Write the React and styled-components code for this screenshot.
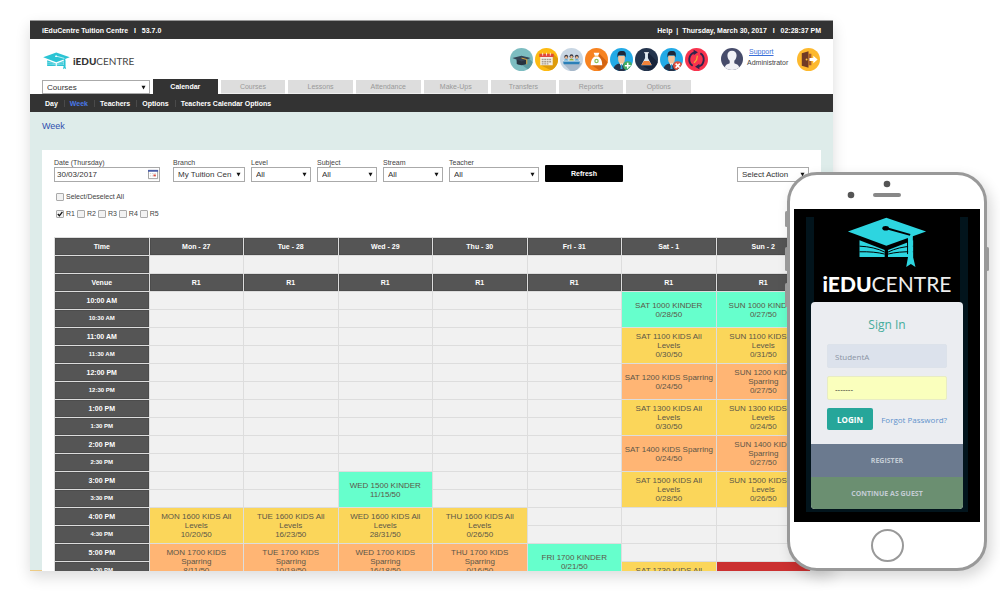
import React, { useState } from 'react';
import styled, { createGlobalStyle, css } from 'styled-components';

const GlobalStyle = createGlobalStyle`
  * {
    box-sizing: border-box;
  }
  body {
    margin: 0;
    background: #fff;
    font-family: "Liberation Sans", Arial, sans-serif;
    font-size: 7px;
    color: #444;
  }
  button, input, select {
    font-family: inherit;
    margin: 0;
  }
`

const Page = styled.div`
  position: relative;
  height: 100vh;
  min-height: 500px;
  padding: 20px 167px 20px 30px;
  overflow: hidden;
`

const Window = styled.div`
  height: 100%;
  overflow: hidden;
  background: linear-gradient(#edcb85, #edcb85) no-repeat bottom / 100% 1px, #deecea;
  box-shadow: 0 6px 14px rgba(0, 0, 0, .14);
`

/* ---------- top of the admin window ---------- */

const TopBar = styled.div`
  display: flex;
  justify-content: space-between;
  align-items: center;
  height: 19px;
  padding: 0 12px;
  border-top: 1px solid #999;
  background: #333;
  color: #fff;
  font-weight: bold;
  white-space: pre;
`

const TopLink = styled.a`
  color: #fff;
  text-decoration: none;
`

const Header = styled.header`
  display: flex;
  align-items: center;
  height: 40px;
  padding: 0 13px;
  background: #fff;
`

const Brand = styled.div`
  display: flex;
  align-items: center;
  gap: 3px;
  margin-right: auto;
  padding-top: 3px;
  svg {
    width: 27px;
    height: 18px;
  }
`

const BrandName = styled.span`
  font-family: Lato, sans-serif;
  font-size: 10px;
  line-height: 12px;
  color: #444;
  b {
    font-weight: 900;
    color: #333;
  }
`

const IconBar = styled.nav`
  display: flex;
  gap: 2px;
  margin-right: 13px;
`

const RoundButton = styled.button`
  width: 23px;
  height: 23px;
  padding: 0;
  border: 0;
  border-radius: 50%;
  overflow: hidden;
  background: ${props => props.$color};
  svg {
    display: block;
    width: 23px;
    height: 23px;
  }
`

const User = styled.div`
  display: flex;
  align-items: center;
  gap: 4px;
  margin-right: 7px;
  line-height: 11px;
  svg {
    width: 22px;
    height: 22px;
  }
`

const UserText = styled.div`
  display: flex;
  flex-direction: column;
  padding-bottom: 4px;
  width: 43px;
  a {
    color: #3a6fd8;
    padding-left: 2px;
  }
`

const TabRow = styled.div`
  display: flex;
  align-items: flex-end;
  gap: 3px;
  height: 15px;
  padding: 0 142px 0 12px;
  background: #fff;
`

const Tab = styled.button`
  flex: 1;
  height: 14px;
  padding: 0;
  border: 0;
  border-bottom: 1px solid #eee;
  background: #ddd;
  color: #999;
  font-size: 7px;
  ${props => props.$active && css`
    height: 15px;
    border-bottom-color: #333;
    background: #333;
    color: #fff;
    font-weight: bold;
  `}
`

const SubNav = styled.nav`
  display: flex;
  align-items: center;
  height: 18px;
  padding: 0 9px;
  background: #333;
`

const SubLink = styled.a`
  padding: 0 6px 0 5px;
  border-left: 1px solid #4a4a4a;
  color: ${props => (props.$active ? '#4a78e8' : '#fff')};
  font-weight: bold;
  text-decoration: none;
  &:first-child {
    border-left-color: transparent;
  }
`

/* ---------- filters ---------- */

const Title = styled.h1`
  margin: 0;
  padding: 8px 12px 18px;
  font-size: 9px;
  line-height: 12px;
  font-weight: normal;
  color: #2f4fae;
`

const Panel = styled.main`
  margin: 0 12px;
  padding: 8px 10px 0 12px;
  background: #fff;
`

const arrow = `url("data:image/svg+xml,%3Csvg xmlns='http://www.w3.org/2000/svg' viewBox='0 0 6 6'%3E%3Cpath d='M.6 1h4.8L3 5.4z' fill='%23111'/%3E%3C/svg%3E")`
const tick = `url("data:image/svg+xml,%3Csvg xmlns='http://www.w3.org/2000/svg' viewBox='0 0 6 6'%3E%3Cpath d='M.8 3l1.600 1.800L5.400 .8' fill='none' stroke='%23111' stroke-width='1.300'/%3E%3C/svg%3E")`

const Select = styled.select`
  appearance: none;
  width: ${props => props.$width}px;
  height: ${props => props.$height || 15}px;
  padding: 0 10px 0 4px;
  border: 1px solid #aaa;
  border-radius: 0;
  background: #fff ${arrow} no-repeat right 3px center / 5px 5px;
  color: #333;
  font-size: 8px;
`

const Filters = styled.form`
  display: flex;
  align-items: flex-end;
  gap: 6px;
`

const Field = styled.label`
  display: flex;
  flex-direction: column;
  line-height: 9px;
  margin-right: ${props => (props.$wide ? 7 : 0)}px;
`

const DateBox = styled.span`
  display: flex;
  align-items: center;
  width: 106px;
  height: 15px;
  border: 1px solid #aaa;
  background: #fff;
  svg {
    flex: none;
    width: 11px;
    height: 11px;
  }
`

const DateInput = styled.input`
  flex: 1;
  min-width: 0;
  height: 13px;
  padding: 0 2px;
  border: 0;
  color: #333;
  font-size: 8px;
`

const Refresh = styled.button`
  width: 78px;
  height: 17px;
  padding: 0;
  border: 0;
  border-radius: 1px;
  background: #000;
  color: #fff;
  font-size: 7px;
  font-weight: bold;
`

const ActionField = styled.div`
  margin-left: auto;
  margin-right: 2px;
`

const CheckRow = styled.div`
  display: flex;
  gap: 2px;
  height: 10px;
  margin: ${props => props.$top}px 0 0 2px;
`

const Check = styled.label`
  display: flex;
  align-items: center;
  gap: 2px;
  line-height: 10px;
`

const CheckBox = styled.input`
  appearance: none;
  width: 8px;
  height: 8px;
  border: 1px solid #aaa;
  border-radius: 1px;
  background: #f2f2f2;
  &:checked {
    background: #f2f2f2 ${tick} no-repeat center / 6px 6px;
  }
`

/* ---------- week table ---------- */

const Week = styled.table`
  width: 100%;
  margin-top: 18px;
  table-layout: fixed;
  border-spacing: 1px;
  background: #ddd;
`

const HeadCell = styled.th`
  height: 17px;
  padding: 0;
  border: 1px solid #4c4c4c;
  background: #555;
  color: #fff;
  font-size: ${props => (props.$small ? 6 : 7)}px;
  line-height: 9px;
`

const Slot = styled.td`
  height: 17px;
  padding: 0;
  background: #f1f1f1;
`

const colors = {
  kinder: '#66ffcc',
  levels: '#fbd65a',
  sparring: '#ffb574',
  closed: '#cb3030',
}

const Lesson = styled.td`
  padding: 0;
  background: ${props => colors[props.$type]};
  color: #5c5648;
  font-size: 8px;
  line-height: 9px;
  text-align: center;
  white-space: pre;
`

/* ---------- phone ---------- */

const PhoneBody = styled.aside`
  position: absolute;
  right: 13px;
  bottom: 20px;
  width: 200px;
  padding: 0 4px;
  border: 3px solid #999;
  border-radius: 30px;
  background: #fff;
  box-shadow: 4px 6px 14px rgba(0, 0, 0, .16);
`

const SideKey = styled.span`
  position: absolute;
  ${props => props.$side}: -5px;
  top: ${props => props.$top}px;
  width: 3px;
  height: ${props => props.$long ? 24 : 16}px;
  border-radius: 2px;
  background: #999;
`

const PhoneTop = styled.div`
  display: flex;
  justify-content: center;
  height: 34px;
  svg {
    width: 100px;
    height: 34px;
  }
`

const Screen = styled.div`
  padding: 8px 12px 10px;
  background: #000;
`

const Backdrop = styled.div`
  padding: 0 5px 3px;
  background: #02141c;
`

const PhoneLogo = styled.div`
  display: flex;
  flex-direction: column;
  align-items: center;
  height: 85px;
  margin: 0 3px;
  background: #000;
  svg {
    width: 80px;
    height: 51px;
    flex: none;
  }
`

const PhoneName = styled.span`
  font-family: Lato, sans-serif;
  font-size: 21px;
  line-height: 31px;
  color: #eee;
  b {
    font-weight: 900;
    color: #fff;
  }
`

const Card = styled.form`
  border-radius: 4px;
  overflow: hidden;
  background: #ebedf1;
  font-family: "Open Sans", sans-serif;
`

const CardBody = styled.div`
  display: flex;
  flex-direction: column;
  padding: 14px 16px;
`

const SignIn = styled.h2`
  margin: 0 0 10px;
  font-size: 12px;
  line-height: 18px;
  font-weight: normal;
  text-align: center;
  color: #45ac9c;
`

const TextBox = styled.input`
  width: 100%;
  height: 24px;
  margin-bottom: 8px;
  padding: 0 7px;
  border: 1px solid ${props => (props.$filled ? '#e8ecc4' : '#dce2ea')};
  border-radius: 2px;
  background: ${props => (props.$filled ? '#faffbd' : '#dce2ec')};
  color: ${props => (props.$filled ? '#222' : '#8a94a4')};
  font-size: 8px;
`

const LoginRow = styled.div`
  display: flex;
  justify-content: space-between;
  align-items: center;
  a {
    color: #5f93cc;
    font-size: 8px;
    text-decoration: none;
  }
`

const Login = styled.button`
  width: 46px;
  height: 22px;
  padding: 0;
  border: 0;
  border-radius: 2px;
  background: #26a69a;
  color: #fff;
  font-size: 8px;
  font-weight: bold;
`

const WideButton = styled.button`
  display: block;
  width: 100%;
  height: 33px;
  padding: 0;
  border: 0;
  background: ${props => props.$color};
  color: #c3ccd4;
  font-size: 7px;
  font-weight: bold;
  &:last-child {
    height: 32px;
  }
`

const HomeArea = styled.div`
  display: grid;
  place-items: center;
  height: 46px;
`

const HomeButton = styled.button`
  width: 33px;
  height: 33px;
  padding: 0;
  border: 2px solid #999;
  border-radius: 50%;
  background: #fff;
`

/* ---------- drawings ---------- */

const CapLogo = ({ color, gap }) => (
  <svg viewBox="110 22 240 154" aria-hidden="true">
    <path d="M147 92l76 30v21h-76zM309 92l-76 30v21h76z" fill={color} />
    <path d="M147 110q45 2 76 18M147 127q45-1 76 7M309 110q-45 2-76 18M309 127q-45-1-76 7" fill="none" stroke={gap} strokeWidth="3" />
    <path d="M112 66l116-42 120 42-120 43z" fill={color} />
    <path d="M293 76h15v64l8 33-14-9-14 9 6-33z" fill={color} />
    <path d="M292 90v44" stroke={gap} strokeWidth="3" />
    <ellipse cx="226" cy="56" rx="10" ry="7" fill={gap} />
    <path d="M226 55l74 21" fill="none" stroke={gap} strokeWidth="6" />
  </svg>
)

const Person = () => (
  <>
    <path d="M3 24c1-6 4-8 9-8s8 2 9 8z" fill="#26324a" />
    <path d="M9.500 15.500l2.500 4 2.500-4z" fill="#fff" />
    <path d="M11.500 17h1l.6 5h-2.200z" fill="#2b9ed8" />
    <path d="M8.500 8h7v4c0 3-2 4.500-3.500 4.500S8.500 15 8.500 12z" fill="#f4c59c" />
    <path d="M8 10c-1-5 1-7 4.500-7s5 2 3.500 7l-1-2.500H9z" fill="#1d2638" />
  </>
)

const icons = [
  {
    name: 'Courses',
    color: '#7dbdc1',
    art: <>
      <path d="M6 13l15 11 3-9-6-6z" fill="#5c9ba1" />
      <path d="M7 11v5.500c3 2 7 2 10 0V11z" fill="#26323e" />
      <path d="M2.500 10.500L12 8l9.500 2.500L12 14z" fill="#344454" />
      <path d="M12 10.500l5.500 1.500v5" fill="none" stroke="#e3a83c" strokeWidth="1" />
    </>,
  },
  {
    name: 'Calendar',
    color: '#fdba12',
    art: <>
      <path d="M19 6l5 5v9l-6 4-12-6z" fill="#dd9b0c" />
      <path d="M5.500 7h13v11h-13z" fill="#f4efe6" />
      <path d="M4.500 6h15v3.500h-15z" fill="#e0493b" />
      <path d="M8 5v3M12 5v3M16 5v3" stroke="#fff" strokeWidth=".8" />
      <path d="M7 12h10M7 14.300h10M7 16.600h7" stroke="#a79c8d" strokeWidth="1.400" strokeDasharray="2 .6" />
    </>,
  },
  {
    name: 'Classes',
    color: '#c8d6e3',
    art: <>
      <path d="M3 16l8 8h6l6-8z" fill="#a7b8ca" />
      <g fill="#3b3b46"><circle cx="6.500" cy="9" r="2" /><circle cx="12" cy="8.500" r="2" /><circle cx="17.500" cy="9" r="2" /></g>
      <g fill="#efb98d"><circle cx="6.500" cy="9.800" r="1.300" /><circle cx="12" cy="9.400" r="1.300" /><circle cx="17.500" cy="9.800" r="1.300" /></g>
      <path d="M4 14c0-3 5-3 5 0zM15 14c0-3 5-3 5 0z" fill="#2f93c8" />
      <path d="M9.500 14c0-4 5-4 5 0z" fill="#8fae3c" />
      <path d="M3 13.500h18l-1 3.500H4z" fill="#2b80b8" />
      <path d="M3 13h18v1.200H3z" fill="#f4f7fa" />
    </>,
  },
  {
    name: 'Payments',
    color: '#f78320',
    art: <>
      <path d="M15 6l9 9-8 9-9-6z" fill="#d46411" />
      <path d="M9 5h6l-1.500 3.500c3.500 2 4.500 5.500 4.500 9.500H6c0-4 1-7.500 4.500-9.500z" fill="#fff" />
      <path d="M9.500 8.500h5" stroke="#f0b04a" />
      <circle cx="12" cy="13.500" r="1.700" fill="none" stroke="#8cbf5a" strokeWidth="1.300" />
    </>,
  },
  {
    name: 'Add student',
    color: '#23aae6',
    art: <>
      <Person />
      <circle cx="18.500" cy="18.500" r="4.800" fill="#45ad63" />
      <path d="M18.500 15.500v6M15.500 18.500h6" stroke="#fff" strokeWidth="1.600" />
    </>,
  },
  {
    name: 'Trials',
    color: '#24344d',
    art: <>
      <path d="M14 5l10 10-7 9-10-6z" fill="#17233a" />
      <path d="M10.500 5h3v5.500l4 7.500h-11l4-7.500z" fill="#dfe9f2" />
      <path d="M9.200 13.500h5.600l2.300 4.300H6.900z" fill="#f0823a" />
      <path d="M9.500 5h5" stroke="#fff" strokeWidth="1.200" />
    </>,
  },
  {
    name: 'Remove student',
    color: '#23aae6',
    art: <>
      <Person />
      <circle cx="18.500" cy="18.500" r="4.800" fill="#e2503d" />
      <path d="M16.300 16.300l4.400 4.400M20.700 16.300l-4.400 4.400" stroke="#fff" strokeWidth="1.600" />
    </>,
  },
  {
    name: 'Sync',
    color: '#f8334e',
    art: <>
      <path d="M10 4.500A7.800 7.800 0 0 0 8 18.500M14 19.500A7.800 7.800 0 0 0 16 5.500" fill="none" stroke="#30254c" strokeWidth="2" />
      <path d="M9 1.800l4.500 2.700L9 7.500zM15 22.200l-4.500-2.700L15 16.500z" fill="#30254c" />
      <path d="M13 8l-1 4.500-2.500 3" fill="none" stroke="#f1a534" strokeWidth="1.400" />
    </>,
  },
]

const Avatar = () => (
  <svg viewBox="0 0 24 24" aria-hidden="true">
    <circle cx="12" cy="12" r="12" fill="#474c6b" />
    <path d="M4 21c1-3 3-3.500 5.500-4.500V14C7.500 12 7 10 7 8c0-3 2-5 5-5s5 2 5 5c0 2-.5 4-2.500 6v2.500C17 17.500 19 18 20 21c-4 4-12 4-16 0z" fill="#f1f1f6" />
  </svg>
)

const ExitIcon = () => (
  <svg viewBox="0 0 24 24" aria-hidden="true">
    <path d="M5 5.500l7-2v17l-7-2z" fill="#6f3a26" />
    <path d="M12 6h3v12h-3z" fill="#a85d2c" />
    <circle cx="10" cy="12" r="1" fill="#fdc23c" />
    <path d="M13 10.500h4V8l4.500 4-4.500 4v-2.500h-4z" fill="#fff" />
  </svg>
)

const CalendarIcon = () => (
  <svg viewBox="0 0 12 12" aria-hidden="true">
    <path d="M.5 1.500h10v9H.5z" fill="#fff" stroke="#999" />
    <path d="M0 1h11v2H0z" fill="#4a5da8" />
    <path d="M2 5h7M2 7.500h7" stroke="#ccc" strokeDasharray="1.500 1" />
    <path d="M6 6h2.500v2H6z" fill="#dc4b3e" />
  </svg>
)

/* ---------- data ---------- */

const tabs = ['Calendar', 'Courses', 'Lessons', 'Attendance', 'Make-Ups', 'Transfers', 'Reports', 'Options'];
const subLinks = ['Day', 'Week', 'Teachers', 'Options', 'Teachers Calendar Options'];
const rooms = ['R1', 'R2', 'R3', 'R4', 'R5'];
const days = ['Mon - 27', 'Tue - 28', 'Wed - 29', 'Thu - 30', 'Fri - 31', 'Sat - 1', 'Sun - 2'];
const filters = [
  { label: 'Branch', value: 'My Tuition Cen', width: 72 },
  { label: 'Level', value: 'All', width: 60 },
  { label: 'Subject', value: 'All', width: 60 },
  { label: 'Stream', value: 'All', width: 60 },
  { label: 'Teacher', value: 'All', width: 90 },
];

const times = [];
for (let h = 10; h < 18; h++) {
  const hour = h > 12 ? h - 12 : h;
  const half = h < 12 ? 'AM' : 'PM';
  times.push(`${hour}:00 ${half}`, `${hour}:30 ${half}`);
}

// day, first half-hour slot, type, text. Every lesson takes two slots
const lessons = [
  [0, 12, 'levels', 'MON 1600 KIDS All\nLevels\n10/20/50'],
  [0, 14, 'sparring', 'MON 1700 KIDS\nSparring\n8/11/50'],
  [1, 12, 'levels', 'TUE 1600 KIDS All\nLevels\n16/23/50'],
  [1, 14, 'sparring', 'TUE 1700 KIDS\nSparring\n10/19/50'],
  [2, 10, 'kinder', 'WED 1500 KINDER\n11/15/50'],
  [2, 12, 'levels', 'WED 1600 KIDS All\nLevels\n28/31/50'],
  [2, 14, 'sparring', 'WED 1700 KIDS\nSparring\n16/18/50'],
  [3, 12, 'levels', 'THU 1600 KIDS All\nLevels\n0/26/50'],
  [3, 14, 'sparring', 'THU 1700 KIDS\nSparring\n0/16/50'],
  [4, 14, 'kinder', 'FRI 1700 KINDER\n0/21/50'],
  [5, 0, 'kinder', 'SAT 1000 KINDER\n0/28/50'],
  [5, 2, 'levels', 'SAT 1100 KIDS All\nLevels\n0/30/50'],
  [5, 4, 'sparring', 'SAT 1200 KIDS Sparring\n0/24/50'],
  [5, 6, 'levels', 'SAT 1300 KIDS All\nLevels\n0/30/50'],
  [5, 8, 'sparring', 'SAT 1400 KIDS Sparring\n0/24/50'],
  [5, 10, 'levels', 'SAT 1500 KIDS All\nLevels\n0/28/50'],
  [5, 15, 'levels', 'SAT 1730 KIDS All'],
  [6, 0, 'kinder', 'SUN 1000 KINDER\n0/27/50'],
  [6, 2, 'levels', 'SUN 1100 KIDS All\nLevels\n0/31/50'],
  [6, 4, 'sparring', 'SUN 1200 KIDS\nSparring\n0/27/50'],
  [6, 6, 'levels', 'SUN 1300 KIDS All\nLevels\n0/24/50'],
  [6, 8, 'sparring', 'SUN 1400 KIDS\nSparring\n0/27/50'],
  [6, 10, 'levels', 'SUN 1500 KIDS All\nLevels\n0/26/50'],
  [6, 15, 'closed', ''],
];

function WeekTable() {
  const renderSlot = (day, slot) => {
    const lesson = lessons.find(l => l[0] === day && l[1] === slot);
    if (lesson) {
      return <Lesson key={day} rowSpan={2} $type={lesson[2]}>{lesson[3]}</Lesson>
    }
    // already covered by the lesson that started one row up
    if (lessons.some(l => l[0] === day && l[1] === slot - 1)) return null;
    return <Slot key={day} />
  }

  return (
    <Week>
      <thead>
        <tr>
          <HeadCell scope="col">Time</HeadCell>
          {days.map(day => <HeadCell key={day} scope="col">{day}</HeadCell>)}
        </tr>
        <tr>
          <HeadCell />
          {days.map(day => <Slot key={day} />)}
        </tr>
        <tr>
          <HeadCell scope="row">Venue</HeadCell>
          {days.map(day => <HeadCell key={day}>R1</HeadCell>)}
        </tr>
      </thead>
      <tbody>
        {times.map((time, slot) => (
          <tr key={time}>
            <HeadCell scope="row" $small={slot % 2 === 1}>{time}</HeadCell>
            {days.map((day, i) => renderSlot(i, slot))}
          </tr>
        ))}
      </tbody>
    </Week>
  )
}

function Phone() {
  return (
    <PhoneBody>
      <SideKey $side="left" $top={36} />
      <SideKey $side="left" $top={72} $long />
      <SideKey $side="left" $top={108} $long />
      <SideKey $side="right" $top={72} $long />
      <PhoneTop>
        <svg viewBox="0 0 100 34" aria-hidden="true">
          <circle cx="50" cy="9" r="3.300" fill="#555" />
          <circle cx="14" cy="20" r="3.300" fill="#555" />
          <rect x="36" y="18" width="28" height="4" rx="2" fill="#888" />
        </svg>
      </PhoneTop>
      <Screen>
        <Backdrop>
          <PhoneLogo>
            <CapLogo color="#2dd5e0" gap="#000" />
            <PhoneName><b>iEDU</b>CENTRE</PhoneName>
          </PhoneLogo>
          <Card>
            <CardBody>
              <SignIn>Sign In</SignIn>
              <TextBox aria-label="Username" defaultValue="StudentA" />
              <TextBox aria-label="Password" defaultValue="-------" $filled />
              <LoginRow>
                <Login type="button">LOGIN</Login>
                <a href="#forgot">Forgot Password?</a>
              </LoginRow>
            </CardBody>
            <WideButton type="button" $color="#6b7a8f">REGISTER</WideButton>
            <WideButton type="button" $color="#6b8f71">CONTINUE AS GUEST</WideButton>
          </Card>
        </Backdrop>
      </Screen>
      <HomeArea>
        <HomeButton aria-label="Home" />
      </HomeArea>
    </PhoneBody>
  )
}

function App() {
  const [ checked, setChecked ] = useState(['R1']);

  const toggle = (room) => {
    setChecked(checked.includes(room) ? checked.filter(r => r !== room) : [...checked, room])
  }

  const toggleAll = () => {
    setChecked(checked.length === rooms.length ? [] : rooms)
  }

  return (
    <Page>
      <GlobalStyle />
      <Window>
        <TopBar>
          <span>iEduCentre Tuition Centre   I   53.7.0</span>
          <span><TopLink href="#help">Help</TopLink>  |  Thursday, March 30, 2017   I   02:28:37 PM</span>
        </TopBar>
        <Header>
          <Brand>
            <CapLogo color="#2bc4d4" gap="#fff" />
            <BrandName><b>iEDU</b>CENTRE</BrandName>
          </Brand>
          <IconBar>
            {icons.map(icon => (
              <RoundButton key={icon.name} $color={icon.color} aria-label={icon.name}>
                <svg viewBox="0 0 24 24" aria-hidden="true">{icon.art}</svg>
              </RoundButton>
            ))}
          </IconBar>
          <User>
            <Avatar />
            <UserText>
              <a href="#support">Support</a>
              <span>Administrator</span>
            </UserText>
          </User>
          <RoundButton $color="#fdb92e" aria-label="Log out"><ExitIcon /></RoundButton>
        </Header>
        <TabRow>
          <Select $width={108} $height={14} aria-label="Search in">
            <option>Courses</option>
          </Select>
          {tabs.map(tab => <Tab key={tab} $active={tab === 'Calendar'}>{tab}</Tab>)}
        </TabRow>
        <SubNav>
          {subLinks.map(link => <SubLink key={link} href="#calendar" $active={link === 'Week'}>{link}</SubLink>)}
        </SubNav>
        <Title>Week</Title>
        <Panel>
          <Filters>
            <Field $wide>
              Date (Thursday)
              <DateBox>
                <DateInput defaultValue="30/03/2017" />
                <CalendarIcon />
              </DateBox>
            </Field>
            {filters.map(filter => (
              <Field key={filter.label}>
                {filter.label}
                <Select $width={filter.width}><option>{filter.value}</option></Select>
              </Field>
            ))}
            <Refresh type="button">Refresh</Refresh>
            <ActionField>
              <Select $width={72} aria-label="Select Action"><option>Select Action</option></Select>
            </ActionField>
          </Filters>
          <CheckRow $top={10}>
            <Check>
              <CheckBox type="checkbox" checked={checked.length === rooms.length} onChange={toggleAll} />
              Select/Deselect All
            </Check>
          </CheckRow>
          <CheckRow $top={7}>
            {rooms.map(room => (
              <Check key={room}>
                <CheckBox type="checkbox" checked={checked.includes(room)} onChange={() => toggle(room)} />
                {room}
              </Check>
            ))}
          </CheckRow>
          <WeekTable />
        </Panel>
      </Window>
      <Phone />
    </Page>
  )
}

export default App
